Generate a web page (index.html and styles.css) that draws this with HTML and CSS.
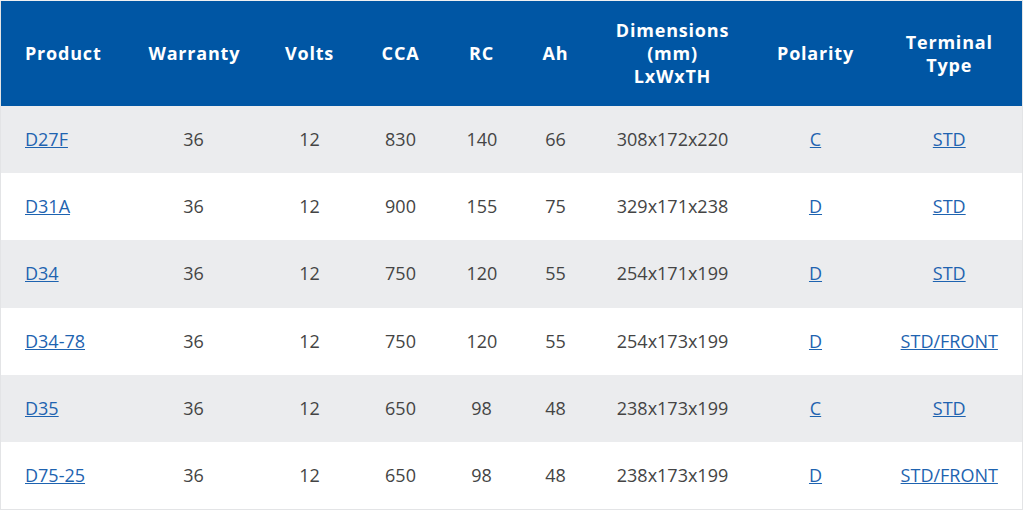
FILE: index.html
```html
<!DOCTYPE html>
<html>
<head>
<meta charset="utf-8">
<link rel="stylesheet" href="styles.css">
</head>
<body>
<table class="spec">
  <colgroup>
    <col class="c1"><col class="c2"><col class="c3"><col class="c4"><col class="c5"><col class="c6"><col class="c7"><col class="c8"><col class="c9">
  </colgroup>
  <thead>
    <tr>
      <th class="left">Product</th>
      <th>Warranty</th>
      <th>Volts</th>
      <th>CCA</th>
      <th>RC</th>
      <th>Ah</th>
      <th>Dimensions (mm) LxWxTH</th>
      <th>Polarity</th>
      <th>Terminal Type</th>
    </tr>
  </thead>
  <tbody>
    <tr><td class="left"><a href="#">D27F</a></td><td>36</td><td>12</td><td>830</td><td>140</td><td>66</td><td>308x172x220</td><td><a href="#">C</a></td><td><a href="#">STD</a></td></tr>
    <tr><td class="left"><a href="#">D31A</a></td><td>36</td><td>12</td><td>900</td><td>155</td><td>75</td><td>329x171x238</td><td><a href="#">D</a></td><td><a href="#">STD</a></td></tr>
    <tr><td class="left"><a href="#">D34</a></td><td>36</td><td>12</td><td>750</td><td>120</td><td>55</td><td>254x171x199</td><td><a href="#">D</a></td><td><a href="#">STD</a></td></tr>
    <tr><td class="left"><a href="#">D34-78</a></td><td>36</td><td>12</td><td>750</td><td>120</td><td>55</td><td>254x173x199</td><td><a href="#">D</a></td><td><a href="#">STD/FRONT</a></td></tr>
    <tr><td class="left"><a href="#">D35</a></td><td>36</td><td>12</td><td>650</td><td>98</td><td>48</td><td>238x173x199</td><td><a href="#">C</a></td><td><a href="#">STD</a></td></tr>
    <tr><td class="left"><a href="#">D75-25</a></td><td>36</td><td>12</td><td>650</td><td>98</td><td>48</td><td>238x173x199</td><td><a href="#">D</a></td><td><a href="#">STD/FRONT</a></td></tr>
  </tbody>
</table>
</body>
</html>
```
FILE: styles.css
```css
html, body {
  margin: 0;
  padding: 0;
  background: #ffffff;
}
body {
  font-family: "Open Sans", "Liberation Sans", sans-serif;
}
.spec {
  width: 1023px;
  border-collapse: collapse;
  table-layout: fixed;
  border: 1px solid #e3e4e6;
  border-top: 1px solid #eef0f2;
}
.c1 { width: 126px; }
.c2 { width: 134px; }
.c3 { width: 98px; }
.c4 { width: 84px; }
.c5 { width: 78px; }
.c6 { width: 70px; }
.c7 { width: 164px; }
.c8 { width: 122px; }
.c9 { width: 146px; }
.spec th {
  background: #0056a4;
  color: #ffffff;
  font-weight: 700;
  font-size: 18px;
  line-height: 23px;
  letter-spacing: 0.8px;
  padding: 18px 22px;
  height: 69px;
  text-align: center;
  vertical-align: middle;
}
.spec td {
  font-size: 18px;
  line-height: 27px;
  color: #444444;
  padding: 20px 24px;
  height: 27.2px;
  text-align: center;
  vertical-align: middle;
}
.spec th.left, .spec td.left {
  text-align: left;
  padding-left: 24px;
}
.spec tbody tr:nth-child(odd) td {
  background: #ebecee;
}
.spec a {
  color: #1e63b0;
  text-decoration: underline;
}
```
